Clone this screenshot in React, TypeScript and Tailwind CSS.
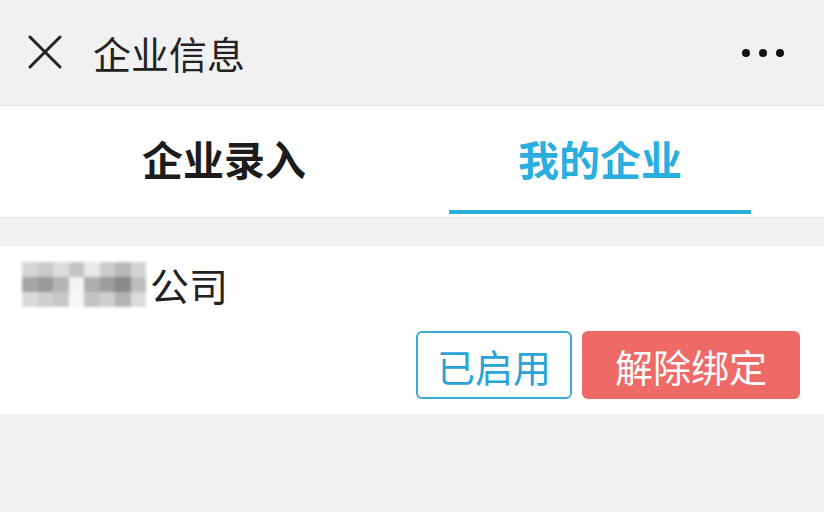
import React from 'react';

const font = { fontFamily: '"Noto Sans CJK SC", "Noto Sans", sans-serif' };

const Mosaic = () => {
  const cells = [
    ['#d6d6d6', '#c9c9c9', '#dcdcdc', '#c4c4c4', '#e8e8e8', '#cbcbcb', '#b9b9b9', '#d4d4d4'],
    ['#a6a6a6', '#9a9a9a', '#b5b5b5', '#f4f4f4', '#aeaeae', '#9c9c9c', '#8a8a8a', '#bdbdbd'],
    ['#dadada', '#cfcfcf', '#c7c7c7', '#f7f7f7', '#c3c3c3', '#cfcfcf', '#b3b3b3', '#dcdcdc'],
  ];
  return (
    <div className="grid grid-cols-8 blur-[1.5px]">
      {cells.flat().map((c, i) => (
        <div key={i} className="h-[15px] w-[15.5px]" style={{ backgroundColor: c }} />
      ))}
    </div>
  );
};

export default function App() {
  return (
    <div className="h-[512px] w-[824px] overflow-hidden bg-[#f1f1f1]" style={font}>
      {/* top bar */}
      <div className="flex h-[105px] items-center pl-[28px] pr-[40px]">
        <svg width="34" height="34" viewBox="0 0 34 34" className="mb-[2px]">
          <path d="M2 2 L32 32 M32 2 L2 32" stroke="#222" strokeWidth="3" strokeLinecap="round" />
        </svg>
        <span className="ml-[31px] text-[38px] leading-none text-[#222]">企业信息</span>
        <div className="ml-auto flex gap-[9px]">
          <span className="h-[8px] w-[8px] rounded-full bg-[#111]" />
          <span className="h-[8px] w-[8px] rounded-full bg-[#111]" />
          <span className="h-[8px] w-[8px] rounded-full bg-[#111]" />
        </div>
      </div>

      {/* tabs */}
      <div className="grid h-[113px] grid-cols-2 border-y border-[#e2e2e2] bg-white px-[36px]">
        <div className="flex items-center justify-center pb-[6px]">
          <span className="text-[41px] font-bold text-[#1c1c1c]">企业录入</span>
        </div>
        <div className="relative flex items-center justify-center pb-[6px]">
          <span className="text-[41px] font-bold text-[#2aaee0]">我的企业</span>
          <span className="absolute bottom-[3px] left-1/2 h-[4px] w-[302px] -translate-x-1/2 bg-[#2aaee0]" />
        </div>
      </div>

      {/* company card */}
      <div className="mt-[28px] h-[168px] bg-white pl-[22px] pr-[24px] pt-[16px]">
        <div className="flex items-center">
          <Mosaic />
          <span className="ml-[4px] text-[39px] leading-none text-[#222]">公司</span>
        </div>
        <div className="mt-[24px] flex justify-end gap-[10px]">
          <div className="flex h-[68px] w-[156px] items-center justify-center rounded-[6px] border-2 border-[#3aa9d8] text-[38px] text-[#2aa3d6]">
            已启用
          </div>
          <div className="flex h-[68px] w-[218px] items-center justify-center rounded-[6px] bg-[#ee6a66] text-[38px] text-white">
            解除绑定
          </div>
        </div>
      </div>
    </div>
  );
}
